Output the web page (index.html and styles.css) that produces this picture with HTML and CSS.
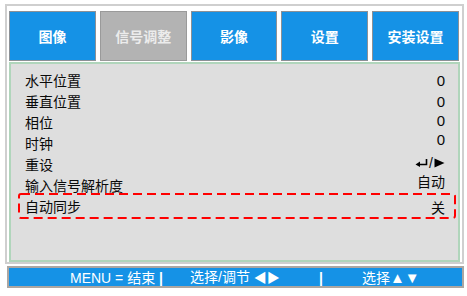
FILE: index.html
```html
<!DOCTYPE html>
<html lang="zh">
<head>
<meta charset="utf-8">
<link rel="stylesheet" href="styles.css">
</head>
<body>
<div class="frame">
  <div class="tabs">
    <div class="tab">图像</div>
    <div class="tab active">信号调整</div>
    <div class="tab">影像</div>
    <div class="tab">设置</div>
    <div class="tab">安装设置</div>
  </div>
  <div class="panel">
    <div class="row"><span class="label">水平位置</span><span class="value up2">0</span></div>
    <div class="row"><span class="label">垂直位置</span><span class="value up2">0</span></div>
    <div class="row"><span class="label">相位</span><span class="value up1">0</span></div>
    <div class="row"><span class="label">时钟</span><span class="value up3">0</span></div>
    <div class="row"><span class="label">重设</span><span class="value up1">
      <svg class="enter" width="13" height="9" viewBox="0 0 13 9"><path d="M4 6.5 H11.5 V1" fill="none" stroke="#000" stroke-width="1.6"/><path d="M0.5 6.5 L5 3.5 L5 9 Z" fill="#000"/></svg><span class="slash">/</span><svg class="play" width="11" height="10" viewBox="0 0 11 10"><path d="M0.5 0.5 L10.5 5 L0.5 9.5 Z" fill="#000"/></svg>
    </span></div>
    <div class="row"><span class="label">输入信号解析度</span><span class="value cjk up4">自动</span></div>
    <div class="row selected">
      <span class="label">自动同步</span><span class="value cjk up2">关</span>
      <svg class="dash" width="438" height="26" viewBox="0 0 438 26"><rect x="1" y="1" width="436" height="24" rx="2" fill="none" stroke="#ff0000" stroke-width="2" stroke-dasharray="9 5"/></svg>
    </div>
  </div>
</div>
<div class="bar">
  <span class="b1">MENU = 结束 <b>|</b></span>
  <span class="b2">选择/调节 <span class="tri">◀▶</span></span>
  <span class="b3"><b>|</b></span>
  <span class="b4">选择<span class="tri2">▲▼</span></span>
</div>
</body>
</html>
```
FILE: styles.css
```css
* { box-sizing: border-box; }
body {
  margin: 0;
  background: #ffffff;
  font-family: "Liberation Sans", "Noto Sans CJK SC", sans-serif;
}
.frame {
  margin: 4px 0 0 5px;
  width: 459px;
  height: 260px;
  border: 2px solid #cfcfcf;
  padding: 5px 2px 0 2px;
  background: #ffffff;
}
.tabs {
  display: flex;
  gap: 4px;
  height: 50px;
  padding-right: 1px;
}
.tab {
  flex: 1;
  background: #1592e6;
  border: 1px solid #8c9196;
  color: #ffffff;
  font-family: "Noto Sans CJK SC", sans-serif;
  font-weight: bold;
  font-size: 14px;
  display: flex;
  align-items: center;
  justify-content: center;
}
.tab.active {
  background: #b3b3b3;
  border-color: #9a9a9a;
  color: #ececec;
}
.panel {
  margin-top: 1px;
  height: 200px;
  border: 2px solid #b0d5bb;
  background: #dedede;
  padding: 5px 13px 0 14px;
}
.row {
  position: relative;
  height: 21px;
  display: flex;
  align-items: center;
  justify-content: space-between;
  font-family: "Noto Sans CJK SC", sans-serif;
  font-size: 14px;
  color: #0a0a0a;
}
.value {
  font-family: "Liberation Sans", "Noto Sans CJK SC", sans-serif;
  font-size: 15px;
  display: flex;
  align-items: center;
  position: relative;
}
.value.cjk { font-family: "Noto Sans CJK SC", sans-serif; font-size: 14px; }
.value.up1 { top: -1px; }
.value.up2 { top: 1px; }
.value.up3 { top: -3px; }
.value.up4 { top: -4px; }
.slash { font-size: 14px; margin: 0 1px; }
.enter, .play { display: block; }
.dash {
  position: absolute;
  left: -7px;
  top: -2px;
}
.bar {
  margin: 2px 0 0 7px;
  width: 457px;
  height: 22px;
  border: 2px solid #aba6a2;
  background: #1592e6;
  color: #ffffff;
  font-size: 14px;
  display: grid;
  grid-template-columns: 120px 129px 43px auto;
  padding-left: 61px;
  align-items: center;
  line-height: 18px;
  white-space: nowrap;
}
.bar span { font-family: "Liberation Sans", "Noto Sans CJK SC", sans-serif; }
.bar b { font-weight: bold; }
.tri { font-family: "DejaVu Sans", sans-serif; font-size: 13px; }
.tri2 { font-family: "DejaVu Sans", sans-serif; font-size: 15px; }
```
